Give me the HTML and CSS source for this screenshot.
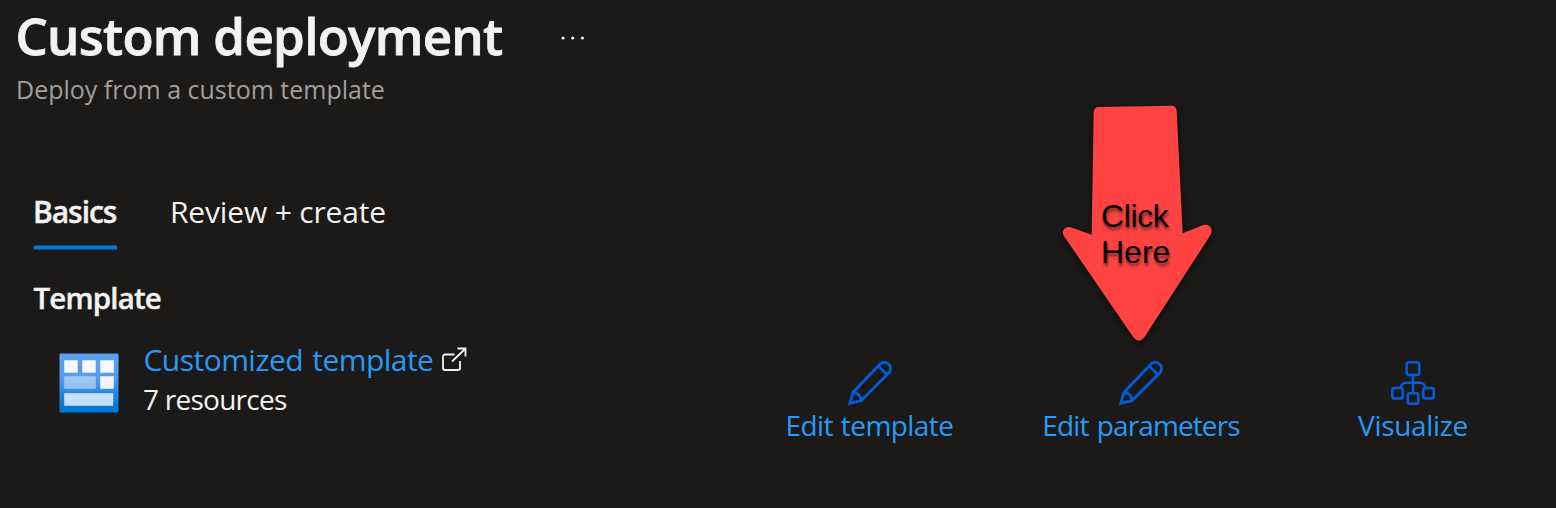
FILE: index.html
```html
<!DOCTYPE html>
<html lang="en">
<head>
<meta charset="utf-8">
<title>Custom deployment</title>
<link rel="stylesheet" href="styles.css">
</head>
<body>
<header class="header">
  <div class="title-row">
    <h1 class="title">Custom deployment</h1>
    <svg class="more" width="26" height="6" viewBox="0 0 26 6" fill="#f3f2f1"><circle cx="3" cy="3" r="1.6"/><circle cx="12.7" cy="3" r="1.6"/><circle cx="22.4" cy="3" r="1.6"/></svg>
  </div>
  <p class="subtitle">Deploy from a custom template</p>
</header>
<main class="content">
  <nav class="tabs">
    <a class="tab tab-active">Basics</a>
    <a class="tab">Review + create</a>
  </nav>
  <h2 class="section-title">Template</h2>
  <div class="template-row">
    <svg class="template-icon" width="60" height="60" viewBox="0 0 60 60">
      <defs><linearGradient id="tile" x1="0" y1="0" x2="0" y2="1"><stop offset="0" stop-color="#5e9ff2"/><stop offset=".4" stop-color="#559bef"/><stop offset=".9" stop-color="#0078d4"/><stop offset="1" stop-color="#0078d4"/></linearGradient></defs>
      <rect x=".5" y=".5" width="59" height="59" rx="1" fill="url(#tile)"/>
      <g fill="#fff" stroke="#fff" stroke-opacity=".45">
        <rect x="5.5" y="7.5" width="13" height="12" fill-opacity=".95"/>
        <rect x="23.5" y="7.5" width="13" height="12" fill-opacity=".95"/>
        <rect x="41.5" y="7.5" width="13" height="12" fill-opacity=".95"/>
        <rect x="5.5" y="23.5" width="31" height="12" fill-opacity=".45" stroke-opacity=".2"/>
        <rect x="41.5" y="23.5" width="13" height="12" fill-opacity=".9"/>
        <rect x="5.5" y="40.5" width="48.500" height="12" fill-opacity=".75" stroke-opacity=".35"/>
      </g>
    </svg>
    <div class="template-info">
      <div class="link-row">
        <a class="template-link">Customized template</a>
        <svg class="external" width="25" height="25" viewBox="0 0 25 25" fill="none" stroke="#f3f2f1" stroke-width="1.8"><path d="M12.500 7.500H3a2 2 0 0 0-2 2V21a2 2 0 0 0 2 2h13a2 2 0 0 0 2-2v-7"/><path d="M10 14.500 23.500 1.500M15.500 1.500h8v8"/></svg>
      </div>
      <div class="resources">7 resources</div>
    </div>
    <div class="actions">
      <a class="action edit-template">
        <svg width="44" height="44" viewBox="0 0 44 44" fill="none" stroke="#015cda" stroke-width="2.8" stroke-linejoin="miter"><path d="M5 31.300 31.900 3.300A6.150 6.150 0 0 1 40.700 12L13 39.700 1.800 42.300ZM5 31.300Q12.500 32 13 39.700M30.500 5.300l8.500 8.500"/></svg>
        <span>Edit template</span>
      </a>
      <a class="action edit-parameters">
        <svg width="44" height="44" viewBox="0 0 44 44" fill="none" stroke="#015cda" stroke-width="2.8" stroke-linejoin="miter"><path d="M5 31.300 31.900 3.300A6.150 6.150 0 0 1 40.700 12L13 39.700 1.800 42.300ZM5 31.300Q12.500 32 13 39.700M30.500 5.300l8.500 8.500"/></svg>
        <span>Edit parameters</span>
      </a>
      <a class="action visualize">
        <svg width="44" height="44" viewBox="0 0 44 44" fill="none" stroke="#015cda" stroke-width="2.6"><rect x="15.700" y="1.300" width="12.600" height="12.600" rx="2.500"/><rect x="1.300" y="27" width="10.400" height="10.400" rx="2"/><rect x="16.800" y="32.300" width="10.400" height="10.400" rx="2"/><rect x="32.300" y="27" width="10.400" height="10.400" rx="2"/><path d="M22 14v18M9.500 27Q11 21.800 14.500 21.800h15Q33 21.800 34.500 27"/></svg>
        <span>Visualize</span>
      </a>
    </div>
  </div>
</main>
<div class="callout">
  <svg class="callout-arrow" width="160" height="250" viewBox="60 30 480 750"><path fill="#ff4343" d="M178 51 393 47.500Q409 47 410 64L428 430 490 405Q505 401 513 414 518 425 511 436L313 742Q297 762 280 742L73 440Q64 427 73 416 81 408 92 412L155 434 161 68Q161 51 178 51Z"/></svg>
  <div class="callout-text"><span class="click">Click</span><span>Here</span></div>
</div>
</body>
</html>
```
FILE: styles.css
```css
* { box-sizing: border-box; }
body {
  margin: 0;
  width: 1556px;
  height: 508px;
  overflow: hidden;
  position: relative;
  background: #1b1a19;
  color: #f3f2f1;
  font-family: "Open Sans", "Noto Sans", sans-serif;
}
svg { display: block; flex: none; }
h1, h2, p { margin: 0; }
span, a, h1, h2, p { white-space: nowrap; }

.header { padding: 5px 0 0 15px; }
.title-row { display: flex; height: 60px; }
.title { width: 545px; padding-left: 0.5px; font-size: 51px; line-height: 60px; font-weight: 600; letter-spacing: -0.7px; -webkit-text-stroke: 0.8px #f3f2f1; }
.more { margin-top: 30px; }
.subtitle { margin-top: 7px; padding-left: 1px; font-size: 25px; line-height: 34px; color: #a19f9d; }

.content { padding: 86px 0 0 33px; }
.tabs { display: flex; gap: 53px; height: 58px; }
.tab { font-size: 30px; line-height: 40px; letter-spacing: -0.16px; }
.tab-active {
  width: 84px;
  font-weight: 600;
  letter-spacing: -1.05px;
  -webkit-text-stroke: 0.4px #f3f2f1;
  background: linear-gradient(#0b4a7d 1px, #0078d4 1px, #0078d4 4px, #0b4a7d 4px) 1px 53px / 83px 5px no-repeat;
}
.section-title { margin-top: 28px; padding-left: 0.5px; font-size: 29.5px; line-height: 40px; font-weight: 600; letter-spacing: -0.85px; -webkit-text-stroke: 0.4px #f3f2f1; }

.template-row { display: flex; margin-top: 21px; padding-left: 26px; }
.template-icon { margin-top: 14px; }
.template-info { width: 335px; margin-left: 24px; }
.link-row { display: flex; gap: 8px; height: 40px; }
.template-link { width: 291px; padding: 1px 0 0 0.5px; color: #2899f5; font-size: 30px; line-height: 40px; letter-spacing: -0.54px; word-spacing: 2px; }
.external { margin-top: 8px; }
.resources { font-size: 28px; line-height: 40px; letter-spacing: -0.75px; }

.actions { display: flex; margin-left: 307px; padding-top: 22px; }
.action { display: flex; flex-direction: column; align-items: center; color: #2899f5; font-size: 28px; line-height: 40px; }
.edit-template { width: 169px; letter-spacing: -0.55px; word-spacing: 1px; }
.edit-parameters { width: 198px; margin-left: 88px; letter-spacing: -0.9px; word-spacing: 2px; }
.visualize { width: 110px; margin-left: 118px; letter-spacing: -0.33px; }

/* Annotation laid over the page */
.callout { position: absolute; left: 1060px; top: 100px; width: 160px; height: 250px; }
.callout-arrow { filter: drop-shadow(0 2px 3px rgba(0, 0, 0, 0.65)); }
.callout-text {
  position: absolute;
  left: 41px;
  top: 98px;
  display: flex;
  flex-direction: column;
  color: #000;
  font: 32px/36px "Liberation Sans", Arial, sans-serif;
  text-shadow: 1px 3px 3px rgba(0, 0, 0, 0.5);
}
.click { letter-spacing: -0.4px; }
```
